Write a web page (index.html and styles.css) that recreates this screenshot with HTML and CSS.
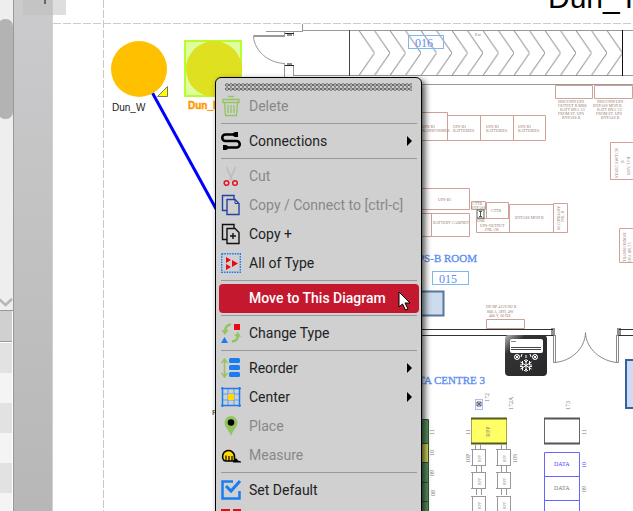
FILE: index.html
```html
<!DOCTYPE html>
<html lang="en">
<head>
<meta charset="utf-8">
<title>Diagram editor</title>
<link rel="stylesheet" href="styles.css">
</head>
<body>
<div class="app">
  <aside class="sidebar">
    <div class="scroller">
      <div class="thumb"></div>
      <svg class="chevron" width="13" height="10" viewBox="0 0 13 10"><path d="M-1 1L5.500 7L12 1" fill="none" stroke="#b5b5b5" stroke-width="2.500"/></svg>
    </div>
    <div class="rows">
      <div class="row head"></div>
      <div class="row"></div><div class="row"></div><div class="row"></div>
      <div class="row"></div><div class="row"></div><div class="row"></div>
    </div>
  </aside>
  <div class="gutter"><span class="tab"></span></div>
  <main class="canvas">
    <svg class="drawing" role="img" aria-label="Floor plan">
      <defs>
        <pattern id="hatch" patternUnits="userSpaceOnUse" x="359" y="30" width="15.500" height="46">
          <path d="M0 0.500L15.500 23L0 45.500" fill="none" stroke="#999"/>
        </pattern>
        <linearGradient id="unit" x1="0" y1="0" x2="1" y2="1">
          <stop offset="0" stop-color="#bbb"/><stop offset=".25" stop-color="#333"/><stop offset="1" stop-color="#28282c"/>
        </linearGradient>
        <g id="rack" fill="none" stroke="#999">
          <path d="M1.500 0.500h13v16h-13zM0 0.500h15M0 16.500h15M5.500 17v6M10.500 17v6"/>
          <text class="tiny grey" transform="translate(10 13) rotate(-90)">RPP</text>
        </g>
      </defs>
      <g transform="translate(-53 0)">
        <path d="M53 23.500H640" stroke="#ccc" stroke-dasharray="8 2"/>
        <path d="M103.500 0V520" stroke="#c8c8c8" stroke-dasharray="8 2"/>
        <text class="title" x="548" y="8">Dun_T</text>

        <!-- nodes and link -->
        <path d="M152.500 93L232 238" stroke="#00f" stroke-width="3"/>
        <circle cx="139" cy="69" r="28" fill="#ffc000"/>
        <path d="M157.500 96.500L167.500 86.500V96.500Z" fill="#ff0" stroke="#777"/>
        <text class="label" x="112" y="111">Dun_W</text>
        <rect x="185" y="41" width="56" height="55" fill="#dfff9f" stroke="#b4ff2c" stroke-width="2"/>
        <circle cx="214" cy="69" r="28" fill="#dfe020"/>
        <text class="label picked" x="188" y="109">Dun_E</text>
        <text class="label small" x="212" y="415">R</text>

        <!-- corridor -->
        <g fill="none" stroke="#999">
          <path d="M302.500 24V31M266 31.500H303M302 30.500H633M293 75.500H633M284.500 64V78M293.500 65V76M284.500 31v5M293.500 31v5M420 84.500H633"/>
          <path d="M285 35.500H253.500V36.500H285M253.500 37C255 51 268 63 285 63.500"/>
          <path d="M349.500 30V76" stroke="#444"/>
          <path d="M285 33.500h9M287 35h5M285 65.500h9M287 64h5" stroke="#222"/>
        </g>
        <rect x="359" y="30" width="263" height="46" fill="url(#hatch)"/>
        <path d="M622.500 30V76" stroke="#111"/>
        <rect x="408.500" y="35.500" width="35" height="13" fill="none" stroke="#7db8ee"/>
        <text class="room" x="415" y="47">016</text>
        <text class="tiny grey" x="475" y="36">Ext</text>

        <!-- equipment cabinets -->
        <g fill="none" stroke="#cfa198">
          <path d="M400 112.500H447.500V141M447.500 115.500H545.500V140.500H400M480.500 115V141M513.500 115V141"/>
          <path d="M555.500 85.500h37v13h-37zM594.500 85.500h38v13h-38z"/>
          <path d="M640 142.500H610.500V179.500H640M640 228.500H619.500V262.500H640"/>
          <path d="M400 188.500H469.500V209.500H400M400 213.500H469.500V236.500H400M431.500 213V237"/>
          <path d="M471.500 201.500h14v8h-14zM486.500 202.500h22v16h-22zM476.500 218.500h33v14h-33zM509.500 204.500h44v28h-44zM553.500 203.500h14v29h-14z"/>
          <path d="M486.500 319.500h38v9h-38z"/>
        </g>
        <rect x="477" y="210" width="7" height="8" fill="#fff" stroke="#576b57"/>
        <path d="M480.500 211v6M479 211.500h3M479 216.500h3" stroke="#555"/>
        <g class="tiny brown">
          <text x="422" y="128">UPS-B1</text><text x="420" y="132">TRANSFORMER</text>
          <text x="453" y="128">UPS-B1</text><text x="453" y="132">BATTERIES</text>
          <text x="486" y="128">UPS-B1</text><text x="486" y="132">BATTERIES</text>
          <text x="518" y="128">UPS-B1</text><text x="518" y="132">BATTERIES</text>
          <text x="558" y="103">DISCONN UPS</text><text x="558" y="107">OUTPUT B MBS</text><text x="560" y="111">BATT BNA '15'</text><text x="558" y="115">FROM ST. UPS</text><text x="562" y="119">BYPASS B</text>
          <text x="597" y="103">DISCONN UPS</text><text x="593" y="107">BYPASS MOD B</text><text x="597" y="111">BATT BNA '15'</text><text x="596" y="115">FROM ST. UPS</text><text x="601" y="119">BYPASS B</text>
          <text x="438" y="201">UPS-B1</text><text x="433" y="224">BATTERY CABINET</text>
          <text x="472" y="205">CTTB</text><text x="471" y="209">BYPASS</text><text x="491" y="212">CTTB</text><text x="477" y="222">DSB</text>
          <text x="480" y="227">UPS-OUTPUT</text><text x="485" y="231">PNL-1B</text><text x="515" y="219">BYPASS MOD B</text>
          <text x="486" y="308">DP-BP 415V/B2 B</text><text x="487" y="313">800 A, 3PH, 4W</text><text x="489" y="317">400 V, 60 HZ</text>
          <text transform="translate(560 230) rotate(-90)">SECONDARY</text><text transform="translate(564 222) rotate(-90)">PNL B</text>
          <text transform="translate(626 262) rotate(-90)">TRANSFORMER</text><text transform="translate(631 262) rotate(-90)">DPA BN,'15</text>
          <text transform="translate(618 178) rotate(-90)">STATIC SWITCH</text><text transform="translate(624 163) rotate(-90)">B</text><text transform="translate(630 175) rotate(-90)">600V, 3 PH,</text>
        </g>

        <text class="room end" x="477" y="262">UPS-B ROOM</text>
        <rect x="432.500" y="271.500" width="36" height="13" fill="none" stroke="#7db8ee"/>
        <text class="room" x="439" y="283">015</text>
        <path d="M400 291.500H443.500V315.500H400" fill="#cddcec" stroke="#59779d" stroke-width="2"/>

        <!-- wall and double door -->
        <g fill="none" stroke="#888">
          <path d="M400 329.500H553M619 329.500H640M400 335.500H553M619 335.500H640" stroke="#333"/>
          <path d="M553.500 335V362.500H555.500V335M616.500 335V362.500H618.500V335"/>
          <path d="M555 362.500C571 361 585 349 585.500 332.500C586 349 601 361 617 362.500"/>
          <path d="M552 328v8M554 328v8M618 328v8M620 328v8" stroke="#222"/>
        </g>
        <rect x="505" y="335" width="42" height="41" rx="4" fill="url(#unit)"/>
        <rect x="510" y="339" width="33" height="14" rx="2" fill="#fff"/>
        <path d="M511 347.500h30M511 349.500h30" stroke="#444"/>
        <path d="M511 341.500h5" stroke="#888"/>
        <g fill="none" stroke="#fff">
          <path d="M526 359v13M520.500 362l11 7M531.500 362l-11 7M524 360l2 2 2-2M524 371l2-2 2 2M520 365h2.500v-4M532 365h-2.500v-4M520 366.500h2.500v4M532 366.500h-2.500v4"/>
          <circle cx="517" cy="357" r="2.500"/><circle cx="535" cy="357" r="2.500"/>
          <path d="M515 355l4 4M519 355l-4 4M533 355l4 4M537 355l-4 4M522 354l-1 3M526 355v3M530 354l1 3"/>
        </g>
        <text class="room end" x="485" y="384">DATA CENTRE 3</text>
        <rect x="626" y="360" width="20" height="48" fill="#cddcf2" stroke="#365f9c" stroke-width="2"/>

        <!-- racks -->
        <rect x="400" y="419" width="28" height="100" fill="#5e9561"/>
        <rect x="400" y="444" width="28" height="18" fill="#ddd95f"/>
        <path d="M400 419.500h28.500V520M400 443.500h28M400 462.500h28M400 482.500h28M400 501.500h28" fill="none" stroke="#315b36"/>
        <rect x="471.500" y="418.500" width="35" height="25" fill="#ff6" stroke="#aaa34a"/>
        <path d="M471 418.500h36M471 443.500h36" stroke="#555b20" stroke-width="2"/>
        <text class="tiny brown wide" transform="translate(490 437) rotate(-90)">RPP</text>
        <path d="M475.500 444v5M480.500 444v5M501.500 444v5M506.500 444v5" stroke="#999"/>
        <use href="#rack" x="471" y="449"/><use href="#rack" x="496" y="449"/>
        <use href="#rack" x="471" y="472"/><use href="#rack" x="496" y="472"/>
        <use href="#rack" x="471" y="496"/><use href="#rack" x="496" y="496"/>
        <rect x="475.500" y="399.500" width="7" height="10" fill="#f4f5ff" stroke="#aebcf5"/>
        <path d="M477 402h4v4h-4zl4 4M481 402l-4 4" fill="none" stroke="#666"/>
        <rect x="544.500" y="418.500" width="35" height="25" fill="#fff" stroke="#666"/>
        <path d="M544 418.500h36M544 443.500h36" stroke="#555" stroke-width="2"/>
        <path d="M544.500 520V452.500H579.500V520M544 476.500h36M544 500.500h36" fill="none" stroke="#66f"/>
        <g class="tiny grey wide">
          <text x="554" y="466" fill="#44f">DATA</text><text x="554" y="490">DATA</text>
          <text transform="translate(489 402) rotate(-90)">172</text><text transform="translate(513 410) rotate(-90)">172A</text><text transform="translate(570 410) rotate(-90)">173</text>
          <text transform="translate(470 435) rotate(-90)">11</text><text transform="translate(586 435) rotate(-90)">11</text>
          <text transform="translate(434 435) rotate(-90)">11</text><text transform="translate(434 456) rotate(-90)">10</text><text transform="translate(434 476) rotate(-90)">09</text><text transform="translate(435 496) rotate(-90)">08</text>
          <text transform="translate(470 463) rotate(-90)">10P</text><text transform="translate(517 463) rotate(-90)">10S</text>
          <text transform="translate(586 468) rotate(-90)" fill="#44f">10</text><text transform="translate(586 492) rotate(-90)">09</text>
        </g>
      </g>
    </svg>
  </main>

  <nav class="menu" aria-label="Node actions">
    <svg class="grip" height="8"><defs><pattern id="dots" width="4" height="8" patternUnits="userSpaceOnUse"><path d="M0 2L2 0.500L4 2M0 2L2 3.500L4 2M0 6L2 4.500L4 6M0 6L2 7.500L4 6" fill="none" stroke="#444" stroke-width=".8"/></pattern></defs><rect width="100%" height="8" fill="url(#dots)"/></svg>
    <button class="item" disabled>
      <svg class="icon" viewBox="0 0 20 20"><path d="M2 3.500h16v3H2zM3.500 7l1 12.500h11l1-12.500M7 9v8M10 9v8M13 9v8M7 0.500h6" fill="none" stroke="#92c562" stroke-width="1.300"/></svg>Delete</button>
    <hr>
    <button class="item">
      <svg class="icon" viewBox="0 0 20 20"><path d="M16 3.500H4.500a3.200 3.200 0 0 0 0 6.500h11a3.200 3.200 0 0 1 0 6.500H4" fill="none" stroke="#000" stroke-width="2.600"/><path d="M12 2l2-1h3v5h-3l-2-1zM2 14h3l2 1v3l-2 1H2z"/></svg>Connections<span class="arrow"></span></button>
    <hr>
    <button class="item" disabled>
      <svg class="icon" viewBox="0 0 20 20"><path d="M5.500 1L11 14M14.500 1L9 14" stroke="#bdbdbd" stroke-width="1.600"/><g fill="none" stroke="#e01525" stroke-width="1.500"><circle cx="5.500" cy="17" r="2.300"/><circle cx="14" cy="17" r="2.300"/></g></svg>Cut</button>
    <button class="item" disabled>
      <svg class="icon" viewBox="0 0 20 20"><path d="M6 15.500H1.500V.500H13V4M6 4.500h8l4 4V19.500H6z" fill="none" stroke="#2343a0" stroke-width="1.400"/><path d="M14 4.500v4h4" fill="none" stroke="#2343a0"/></svg>Copy / Connect to [ctrl-c]</button>
    <button class="item">
      <svg class="icon" viewBox="0 0 20 20"><path d="M6 15.500H1.500V.500H13V4M6 4.500h8l4 4V19.500H6zM12 9v6M9 12h6" fill="none" stroke="#111" stroke-width="1.400"/></svg>Copy +</button>
    <button class="item">
      <svg class="icon" viewBox="0 0 20 20"><path d="M.700 .700h18.600v18.600H.700z" fill="none" stroke="#1b7cf2" stroke-width="1.400" stroke-dasharray="1.600 1"/><path d="M5 4l5 3-5 3zM5 11l5 3-5 3zM11 7l6 3.500-6 3.500z" fill="#e80b16"/></svg>All of Type</button>
    <hr>
    <button class="item active"><span class="icon"></span>Move to This Diagram</button>
    <hr>
    <button class="item">
      <svg class="icon" viewBox="0 0 20 20"><path d="M10 1.500Q4 2 4 9M11 18.500Q17 18 17 12" fill="none" stroke="#92c562" stroke-width="2.500"/><path d="M0.500 7h7L4 12zM13 13l4-4 3 5z" fill="#92c562"/><path d="M13 1h6v6h-6z" fill="#e80b16"/><path d="M3.500 14l3.500 6H0z" fill="#1b7cf2"/></svg>Change Type</button>
    <hr>
    <button class="item">
      <svg class="icon" viewBox="0 0 20 20"><path d="M3.500 2v16M.500 5l3-4 3 4M.500 15l3 4 3-4" fill="none" stroke="#92c562" stroke-width="1.500"/><g fill="#1b7cf2"><rect x="8" y="0" width="11" height="5" rx="1.500"/><rect x="8" y="7" width="11" height="5" rx="1.500"/><rect x="8" y="14" width="11" height="5" rx="1.500"/></g></svg>Reorder<span class="arrow"></span></button>
    <button class="item">
      <svg class="icon" viewBox="0 0 20 20"><path d="M7 1v18M13 1v18M1 7h18M1 13h18" stroke="#5d9fe8"/><path d="M1.500 0v20M18.500 0v20M0 1.500h20M0 18.500h20" stroke="#1b7cf2" stroke-width="1.500"/><path d="M7 7h6v6H7z" fill="#ffd900"/></svg>Center<span class="arrow"></span></button>
    <button class="item" disabled>
      <svg class="icon" viewBox="0 0 20 20"><path d="M10 20C8 14 3.500 11 3.500 6.500a6.500 6.500 0 0 1 13 0C16.500 11 12 14 10 20z" fill="#92c562"/><circle cx="10" cy="6.500" r="3.300"/></svg>Place</button>
    <button class="item" disabled>
      <svg class="icon" viewBox="0 0 20 20"><path d="M3 15.500A6 6 0 1 1 13.500 12V16H5z" fill="#ffdb00" stroke="#000" stroke-width="1.600"/><path d="M12 16.500l3-3.500 2 2.500 3 1V17.500h-8z"/><path d="M5 15v-4.500M8 16v-5M11 16v-5" stroke="#000" stroke-width="1.200"/></svg>Measure</button>
    <hr>
    <button class="item">
      <svg class="icon" viewBox="0 0 20 20"><path d="M12 1.500H1.500v17h17V11" fill="none" stroke="#1b7cf2" stroke-width="2.500"/><path d="M5 6l5 5 9-10" fill="none" stroke="#1b7cf2" stroke-width="3"/></svg>Set Default</button>
    <button class="item" aria-label="Reset">
      <svg class="icon" viewBox="0 0 20 20"><path d="M1.500 8V1.500H9M12 1.500H18.500V8M18 2L11 9" fill="none" stroke="#e80b16" stroke-width="3"/></svg></button>
  </nav>
  <svg class="pointer" width="13" height="20" viewBox="0 0 13 20"><path d="M1 1v15l3.500-3 3 6 2.500-1-3-6h5z" fill="#fff" stroke="#000"/></svg>
</div>
</body>
</html>
```
FILE: styles.css
```css
* { box-sizing: border-box; }
body { margin: 0; background: #fff; font-family: Roboto, "Liberation Sans", sans-serif; }
.app { position: relative; display: flex; height: 100vh; overflow: hidden; }

.sidebar { flex: 0 0 14px; display: flex; flex-direction: column; background: #eee; border-right: 1px solid #999; overflow: hidden; }
.scroller { flex: 0 0 311px; display: flex; flex-direction: column; justify-content: space-between; padding: 19px 0 2px; border-bottom: 1px solid #999; }
.thumb { height: 100px; margin-left: -2px; border-radius: 7px; background: #b3b3b3; }
.chevron { display: block; }
.rows { padding-right: 1px; background: #fff; }
.row { height: 30px; background: #e2e2e2; }
.row:nth-child(odd) { background: #f4f4f4; }
.row.head { height: 31px; margin-bottom: 1px; background: #d0d0d0; border-bottom: 1px solid #999; }

.gutter { position: relative; flex: 0 0 39px; background: linear-gradient(#cbcbcd, #b7b7b7); border-right: 1px solid #d2d2d2; }
.tab { position: absolute; z-index: 1; left: 9px; top: 0; width: 43px; height: 15px; background: rgba(190, 190, 190, .5); }
.tab::before { content: ""; position: absolute; left: 21px; top: 0; width: 2px; height: 4px; background: #666; }

.canvas { flex: 1; min-width: 0; }
.drawing { display: block; width: 100%; height: 100%; }
.title { font: 30px "Liberation Sans", sans-serif; }
.label { font: 10px "Liberation Sans", sans-serif; fill: #222; }
.label.picked { font-weight: bold; fill: #ff9800; stroke: #ff9800; stroke-width: .4px; }
.label.small { font-size: 8px; }
.room { font: 12px "Liberation Serif", serif; fill: #5b8def; }
.room.end { font-size: 11px; text-anchor: end; stroke: #5b8def; stroke-width: .3px; }
.tiny { font: 4px "Liberation Serif", serif; stroke: none; }
.wide { font-size: 6px; }
.brown { fill: #947a70; }
.grey { fill: #777; }

.menu { position: absolute; z-index: 2; left: 215px; top: 77px; width: 207px; padding: 5px 2px 8px 3px; background: #d0d0d0; border: 1px solid #000; border-radius: 6px; box-shadow: 3px 3px 6px rgba(0, 0, 0, .7); }
.grip { display: block; width: 187px; margin: 0 6px 1px; }
.menu hr { height: 1px; margin: 2px 2px 3px; border: 0; background: #999; }
.item { display: flex; align-items: center; gap: 8px; width: 100%; height: 29px; padding: 0 7px 2px 2px; border: 0; border-radius: 4px; background: none; color: #222; font: 14px Roboto, "Liberation Sans", sans-serif; text-align: left; white-space: nowrap; }
.item:disabled { color: #888; }
.item.active { background: #c4182f; color: #fff; font-weight: 500; }
.icon { flex: none; width: 20px; height: 20px; overflow: visible; }
.arrow { margin-left: auto; border-left: 5px solid #000; border-top: 5px solid transparent; border-bottom: 5px solid transparent; }
.pointer { position: absolute; z-index: 3; left: 398px; top: 291px; }
```
